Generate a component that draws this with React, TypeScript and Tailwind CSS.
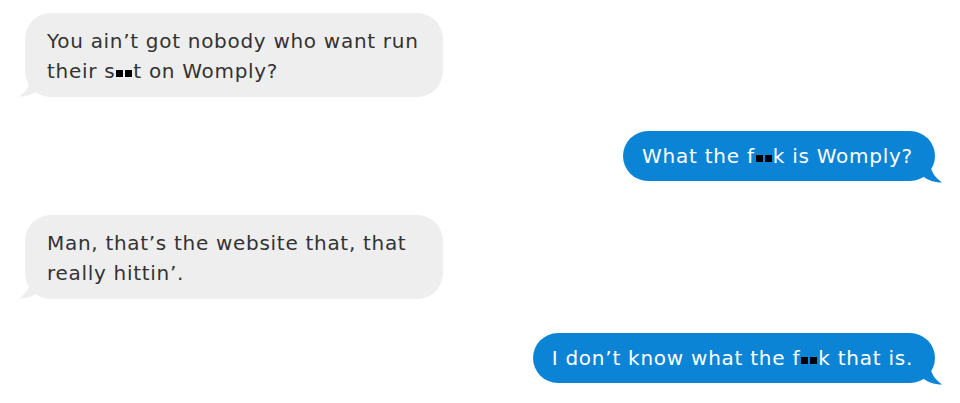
import React from 'react';

const font = { fontFamily: '"DejaVu Sans", "Open Sans", sans-serif' };

function Bleep({ count = 2 }: { count?: number }) {
  return (
    <span className="inline-flex gap-[2px] mx-[1px] align-[1px]">
      {Array.from({ length: count }).map((_, i) => (
        <span key={i} className="inline-block w-[7px] h-[7px] bg-black" />
      ))}
    </span>
  );
}

function LeftTail() {
  return (
    <svg className="absolute left-[-6px] bottom-0" width="22" height="22" viewBox="0 0 22 22">
      <path d="M12 0 C12 9 8 16 0 21.5 C8 21.5 15 19 19 15 L22 0 Z" fill="#eeeeee" />
    </svg>
  );
}

function RightTail() {
  return (
    <svg className="absolute right-[-7px] bottom-[-2px]" width="22" height="22" viewBox="0 0 22 22">
      <path d="M10 0 C10 9 14 16 22 21.5 C14 21.5 7 19 3 15 L0 0 Z" fill="#0c84d6" />
    </svg>
  );
}

function Incoming({ children }: { children: React.ReactNode }) {
  return (
    <div className="relative self-start w-[418px]">
      <LeftTail />
      <div className="relative rounded-[26px] bg-[#eeeeee] pl-[22px] pr-4 pt-[13px] pb-[11px] text-[20px] leading-[30px] tracking-[0.7px] text-[#333333] whitespace-nowrap">
        {children}
      </div>
    </div>
  );
}

function Outgoing({ children }: { children: React.ReactNode }) {
  return (
    <div className="relative self-end">
      <RightTail />
      <div className="relative rounded-[25px] bg-[#0c84d6] h-[50px] flex items-center pl-[19px] pr-[22px] text-[20px] tracking-[0.75px] text-white whitespace-nowrap">
        {children}
      </div>
    </div>
  );
}

export default function App() {
  return (
    <div className="w-[960px] h-[403px] bg-white overflow-hidden" style={font}>
      <div className="flex flex-col gap-[34px] pt-[13px] pl-[25px] pr-[25px]">
        <Incoming>
          You ain’t got nobody who want run
          <br />
          their s<Bleep />t on Womply?
        </Incoming>
        <Outgoing>
          <span>
            What the f<Bleep />k is Womply?
          </span>
        </Outgoing>
        <Incoming>
          Man, that’s the website that, that
          <br />
          really hittin’.
        </Incoming>
        <Outgoing>
          <span>
            I don’t know what the f<Bleep />k that is.
          </span>
        </Outgoing>
      </div>
    </div>
  );
}
